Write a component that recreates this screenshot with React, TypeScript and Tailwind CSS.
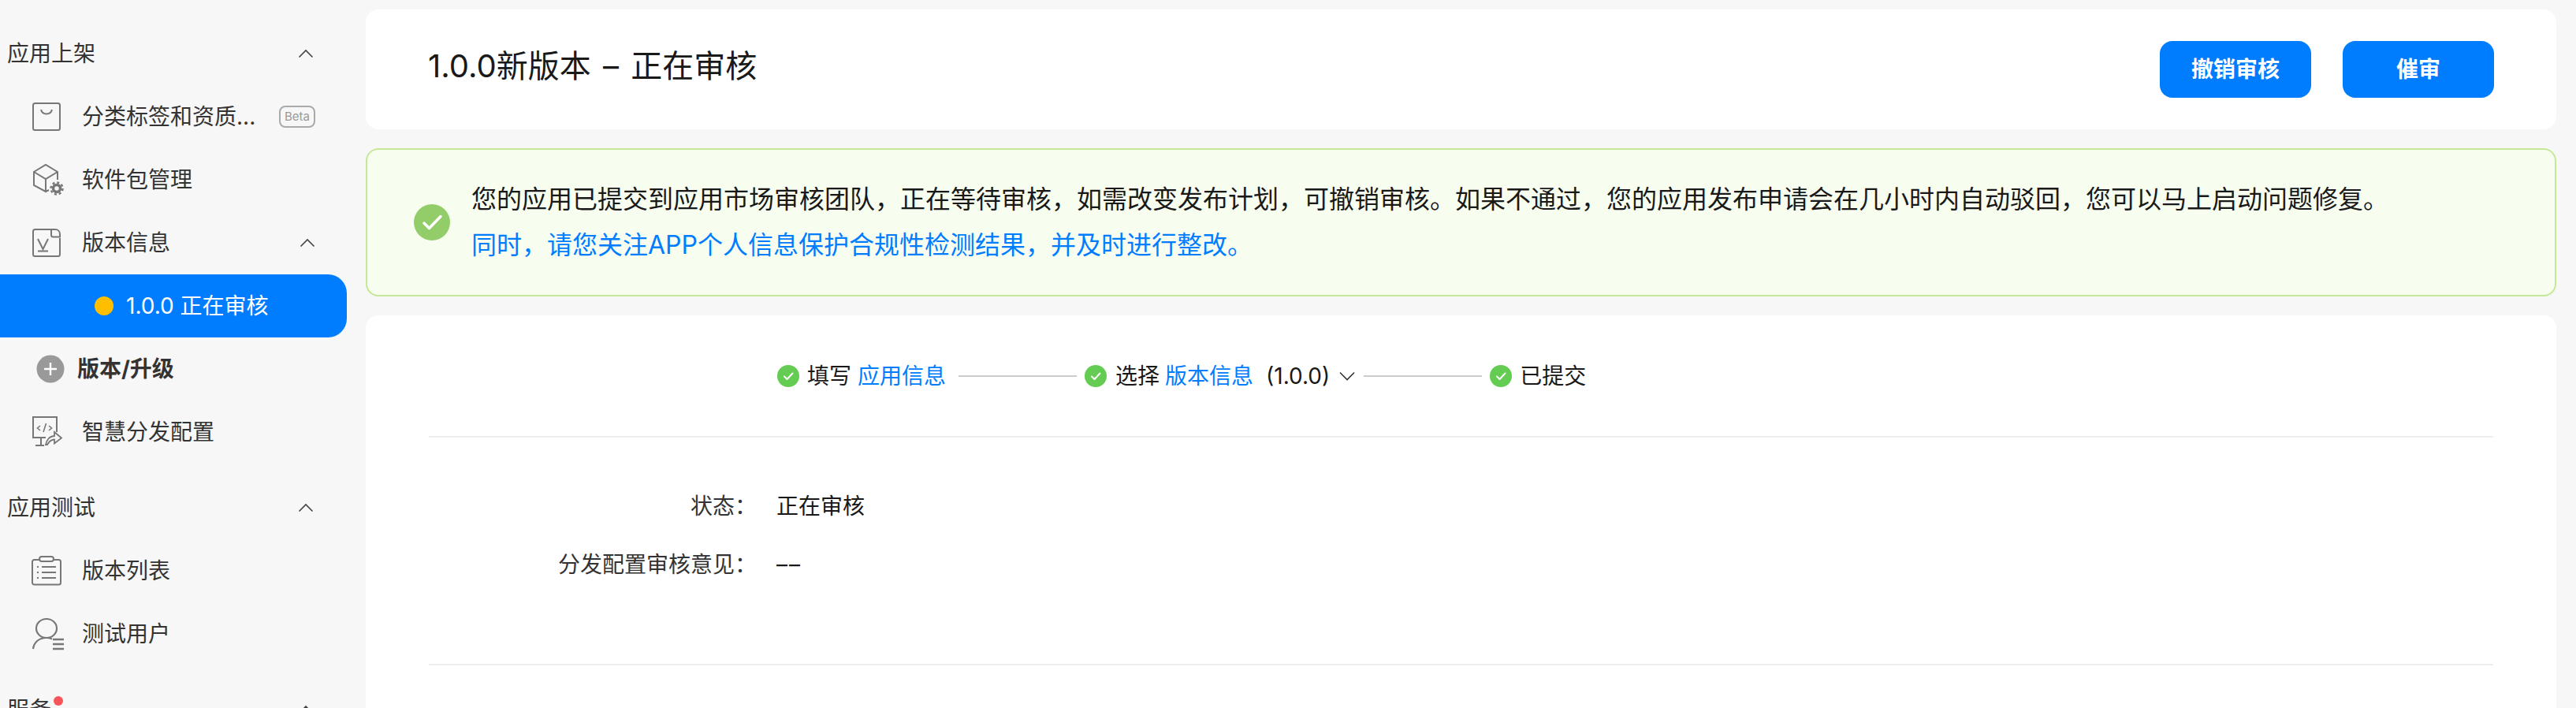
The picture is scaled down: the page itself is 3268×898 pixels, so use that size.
import { ReactNode } from 'react';

const FONT = "font-['Inter','Noto_Sans_CJK_SC',sans-serif]";

const Chevron = () => (
  <svg width="20" height="12" viewBox="0 0 20 12" fill="none" stroke="#444" strokeWidth="1.6">
    <path d="M1.5 10.5 10 2l8.5 8.5" />
  </svg>
);

const BagIcon = () => (
  <svg width="38" height="38" viewBox="0 0 38 38" fill="none" stroke="#777" strokeWidth="2">
    <rect x="2" y="2" width="34" height="34" rx="2.5" />
    <path d="M12 10c1 4 4 5.5 7 5.5s6-1.500 7-5.500" />
  </svg>
);

const BoxIcon = () => (
  <svg width="42" height="42" viewBox="0 0 42 42" fill="none" stroke="#777" strokeWidth="2">
    <path d="M22 34l-4 2-15-8V11L18 2l15 9v10" />
    <path d="M3 11l15 9 15-9M18 20v15" />
    <circle cx="32" cy="32" r="4.500" strokeWidth="3.500" />
    <circle cx="32" cy="32" r="7.500" strokeWidth="2.500" strokeDasharray="3 2.900" />
  </svg>
);

const VersionIcon = () => (
  <svg width="38" height="38" viewBox="0 0 38 38" fill="none" stroke="#777" strokeWidth="2">
    <path d="M24 2H4.500A2.500 2.500 0 0 0 2 4.500v29A2.500 2.500 0 0 0 4.500 36h29a2.500 2.500 0 0 0 2.500-2.500V13" />
    <path d="M25 2v7a2.500 2.500 0 0 0 2.500 2.500H36V8c0-3.500-2.500-6-6-6z" />
    <path d="M8 14l6.500 13L21 14M8 29.500h13" />
  </svg>
);

const SmartIcon = () => (
  <svg width="40" height="40" viewBox="0 0 40 40" fill="none" stroke="#777" strokeWidth="2">
    <path d="M32 20V1H2v26h16M12 27v10M5 37h11" />
    <path d="M11 12l-3.500 3 3.500 3M22 12l3.500 3-3.500 3M18.500 9l-3.500 11" strokeWidth="1.600" />
    <path d="M18 36c1-6 5-11 11-11v-5l9 7.500-9 7v-5c-3 0-6 1-9 6.500z" strokeWidth="1.800" />
  </svg>
);

const ListIcon = () => (
  <svg width="38" height="38" viewBox="0 0 38 38" fill="none" stroke="#777" strokeWidth="2">
    <path d="M10 5H3.500A2.500 2.500 0 0 0 1 7.500V34a2.500 2.500 0 0 0 2.500 2.500h31A2.500 2.500 0 0 0 37 34V7.500A2.500 2.500 0 0 0 34.500 5H28" />
    <rect x="10" y="1" width="18" height="6" rx="3" />
    <path d="M13 14h18M13 21h18M13 28h18M7 14h2M7 21h2M7 28h2" />
  </svg>
);

const UserIcon = () => (
  <svg width="42" height="42" viewBox="0 0 42 42" fill="none" stroke="#777" strokeWidth="2.200">
    <ellipse cx="19" cy="14" rx="13" ry="12" />
    <path d="M2 40c1-8 7-14 17-14 3 0 5 .5 7 1.500" />
    <path d="M27 28h14M27 34h14M27 40h14" strokeWidth="2.400" />
  </svg>
);

const PlusCircle = () => (
  <svg width="36" height="36" viewBox="0 0 36 36">
    <circle cx="18" cy="18" r="17.500" fill="#999" />
    <path d="M18 10v16M10 18h16" stroke="#fff" strokeWidth="2.400" />
  </svg>
);

const StepCheck = () => (
  <svg width="28" height="28" viewBox="0 0 28 28" className="shrink-0">
    <circle cx="14" cy="14" r="14" fill="#64cc52" />
    <path d="M9 14.500l3.500 3.500 7-7.500" fill="none" stroke="#fff" strokeWidth="2" strokeLinecap="round" strokeLinejoin="round" />
  </svg>
);

const NavItem = ({ icon, label, right }: { icon: ReactNode; label: string; right?: ReactNode }) => (
  <div className="flex h-20 items-center pl-10 pr-[64px] text-[28px] text-[#333]">
    <span className="flex w-[64px] shrink-0 items-center">{icon}</span>
    <span className="flex-1 truncate">{label}</span>
    {right}
  </div>
);

const GroupTitle = ({ label, badge }: { label: string; badge?: boolean }) => (
  <div className="flex h-20 items-center justify-between pl-[9px] pr-[66px] text-[28px] text-[#333]">
    <span className="relative">
      {label}
      {badge && <span className="absolute -right-[15px] top-1 h-3 w-3 rounded-full bg-[#f9545a]" />}
    </span>
    <Chevron />
  </div>
);

const Sidebar = () => (
  <aside className="w-[464px] shrink-0 pt-[28px]">
    <GroupTitle label="应用上架" />
    <NavItem
      icon={<BagIcon />}
      label="分类标签和资质..."
      right={
        <span className="ml-2 flex h-[28px] w-[46px] items-center justify-center rounded-lg border-2 border-[#aaa] text-[15px] text-[#999]">
          Beta
        </span>
      }
    />
    <NavItem icon={<BoxIcon />} label="软件包管理" />
    <NavItem icon={<VersionIcon />} label="版本信息" right={<Chevron />} />
    <div className="flex h-20 w-[440px] items-center rounded-r-3xl bg-[#007dff] pl-[120px] text-[28px] text-white">
      <span className="mr-4 h-6 w-6 rounded-full bg-[#ffbf00]" />
      1.0.0 正在审核
    </div>
    <div className="flex h-20 items-center pl-[46px] text-[28px] font-bold text-[#333]">
      <span className="mr-4 flex"><PlusCircle /></span>
      版本/升级
    </div>
    <NavItem icon={<SmartIcon />} label="智慧分发配置" />
    <div className="mt-4">
      <GroupTitle label="应用测试" />
    </div>
    <NavItem icon={<ListIcon />} label="版本列表" />
    <NavItem icon={<UserIcon />} label="测试用户" />
    <div className="mt-4">
      <GroupTitle label="服务" badge />
    </div>
  </aside>
);

const Steps = () => (
  <div className="flex h-[153px] items-center pl-[442px] text-[28px] text-[#191919]">
    <StepCheck />
    <span className="ml-[10px]">填写</span>
    <span className="ml-2 text-[#007dff]">应用信息</span>
    <span className="ml-4 mr-[10px] h-0.5 w-[150px] bg-[#ccc]" />
    <StepCheck />
    <span className="ml-[11px]">选择</span>
    <span className="ml-[7px] text-[#007dff]">版本信息</span>
    <span className="ml-4">(1.0.0)</span>
    <svg width="20" height="12" viewBox="0 0 20 12" fill="none" stroke="#333" strokeWidth="1.600" className="ml-3">
      <path d="M1 1.500 10 10.500l9-9" />
    </svg>
    <span className="ml-[11px] mr-[10px] h-0.5 w-[150px] bg-[#ccc]" />
    <StepCheck />
    <span className="ml-[10px]">已提交</span>
  </div>
);

export default function App() {
  return (
    <div className={`flex h-[898px] overflow-hidden bg-[#f7f7f7] ${FONT}`}>
      <Sidebar />
      <main className="flex flex-1 flex-col gap-6 pr-[25px] pt-3">
        <section className="flex h-[152px] shrink-0 items-center justify-between rounded-2xl bg-white px-[79px]">
          <h1 className="-mt-2 text-[40px] text-[#191919]">
            1.0.0新版本<span className="mx-1"> – </span>正在审核
          </h1>
          <div className="flex gap-10">
            <button className="h-[72px] w-[192px] rounded-2xl bg-[#007dff] text-[28px] font-bold text-white">撤销审核</button>
            <button className="h-[72px] w-[192px] rounded-2xl bg-[#007dff] text-[28px] font-bold text-white">催审</button>
          </div>
        </section>

        <section className="flex h-[188px] shrink-0 items-center rounded-2xl border-2 border-[#c5e896] bg-[#f7fef0] pl-[59px]">
          <svg width="46" height="46" viewBox="0 0 46 46" className="mr-[27px] shrink-0">
            <circle cx="23" cy="23" r="23" fill="#92cd69" />
            <path d="M13 24l6.500 6.500L34 15.500" fill="none" stroke="#fff" strokeWidth="3.500" strokeLinecap="round" strokeLinejoin="round" />
          </svg>
          <div className="text-[32px] leading-[58px] text-[#191919]">
            <p>您的应用已提交到应用市场审核团队，正在等待审核，如需改变发布计划，可撤销审核。如果不通过，您的应用发布申请会在几小时内自动驳回，您可以马上启动问题修复。</p>
            <p className="text-[#007dff]">同时，请您关注APP个人信息保护合规性检测结果，并及时进行整改。</p>
          </div>
        </section>

        <section className="flex-1 rounded-t-2xl bg-white px-[80px]">
          <Steps />
          <div className="h-0.5 bg-[#eee]" />
          <dl className="flex h-[287px] flex-col pt-[50px] text-[28px] text-[#191919]">
            <div className="flex h-[74px] items-center">
              <dt className="w-[416px] text-right text-[#333]">状态：</dt>
              <dd className="ml-[25px]">正在审核</dd>
            </div>
            <div className="flex h-[74px] items-center">
              <dt className="w-[416px] text-right text-[#333]">分发配置审核意见：</dt>
              <dd className="ml-[25px] tracking-[2px]">––</dd>
            </div>
          </dl>
          <div className="h-0.5 bg-[#eee]" />
        </section>
      </main>
    </div>
  );
}
